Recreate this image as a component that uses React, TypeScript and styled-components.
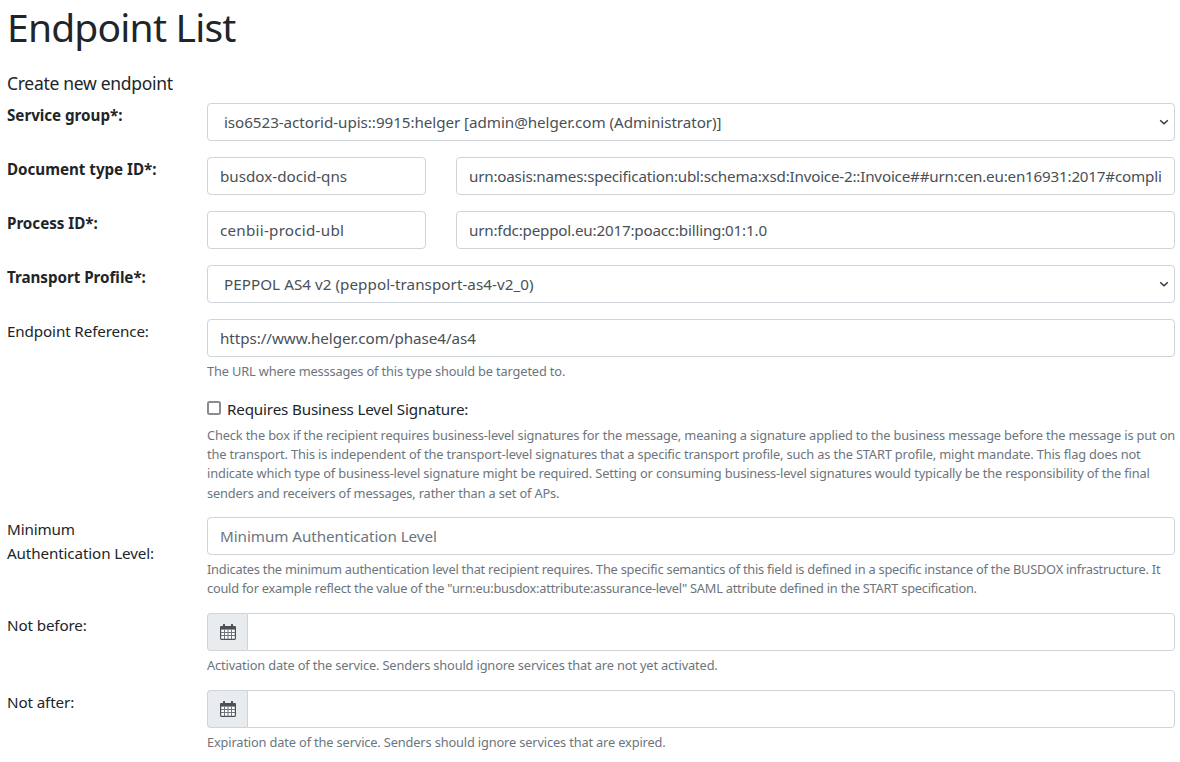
import React from "react";
import styled, { createGlobalStyle } from "styled-components";

const FONT = `"Noto Sans", "Open Sans", "Liberation Sans", sans-serif`;

const chevron = `url("data:image/svg+xml,%3Csvg xmlns='http://www.w3.org/2000/svg' width='10' height='6' viewBox='0 0 10 6'%3E%3Cpath d='M1.2 1.2 5 4.8l3.8-3.6' fill='none' stroke='%23343a40' stroke-width='1.5'/%3E%3C/svg%3E")`;

const Global = createGlobalStyle`
  html, body { margin: 0; padding: 0; background: #fff; }
  body { font-family: ${FONT}; font-size: 16px; line-height: 24px; color: #212529; overflow: hidden; }
`;

const Page = styled.div`
  height: 762px;
  overflow: hidden;
  padding: 0 5px 0 7px;
  box-sizing: border-box;
`;

const Title = styled.h1`
  margin: 0 0 8px;
  padding-top: 3px;
  font-size: 39px;
  line-height: 48px;
  font-weight: 400;
  letter-spacing: -0.8px;
`;

const SubTitle = styled.div`
  font-size: 17.5px;
  line-height: 26px;
  height: 27px;
  letter-spacing: -0.3px;
  padding-top: 2px;
  box-sizing: border-box;
  margin: 17px 0 7.7px;
`;

const Row = styled.div`
  display: grid;
  grid-template-columns: 200px 1fr;
  margin-bottom: 16px;
`;

const Label = styled.label<{ $required?: boolean }>`
  font-size: 15.2px;
  line-height: 24px;
  letter-spacing: ${(p) => (p.$required ? "-0.03px" : "-0.12px")};
  font-weight: ${(p) => (p.$required ? 700 : 400)};
`;

const Field = styled.div`
  min-width: 0;
`;

const Pair = styled.div`
  display: grid;
  grid-template-columns: 219px 1fr;
  column-gap: 30px;
`;

const controlCss = `
  display: block;
  width: 100%;
  height: 38px;
  box-sizing: border-box;
  padding: 6px 12px;
  font-family: ${FONT};
  font-size: 15.2px;
  line-height: 24px;
  color: #495057;
  background-color: #fff;
  border: 1px solid #ced4da;
  border-radius: 4px;
  outline: none;
`;

const Input = styled.input<{ $tracking?: number }>`
  ${controlCss}
  letter-spacing: ${(p) => p.$tracking ?? -0.05}px;
  &::placeholder { color: #6c757d; opacity: 1; }
`;

const Select = styled.select<{ $tracking?: number }>`
  ${controlCss}
  letter-spacing: ${(p) => p.$tracking ?? -0.05}px;
  appearance: none;
  padding-left: 16px;
  padding-right: 24px;
  background-image: ${chevron};
  background-repeat: no-repeat;
  background-position: right 5px center;
`;

const Help = styled.small<{ $tracking?: number }>`
  display: block;
  margin: 5px 0 -1px;
  font-size: 12.8px;
  line-height: 19.2px;
  letter-spacing: ${(p) => p.$tracking ?? -0.145}px;
  color: #6c757d;
  white-space: nowrap;
`;

const CheckHelp = styled(Help)`
  margin-bottom: -2px;
`;

const CheckLabel = styled.label`
  display: flex;
  align-items: center;
  padding-top: 1px;
  font-size: 15.2px;
  line-height: 24px;
  letter-spacing: -0.16px;
`;

const Check = styled.input`
  appearance: none;
  width: 14px;
  height: 14px;
  box-sizing: border-box;
  margin: 0 6px 0 0;
  background: #fff;
  border: 2px solid #8a8a94;
  border-radius: 2.5px;
  position: relative;
  top: -1px;
`;

const InputGroup = styled.div`
  display: flex;
  height: 38px;
`;

const Addon = styled.span`
  display: flex;
  align-items: center;
  justify-content: center;
  flex: 0 0 40px;
  box-sizing: border-box;
  background: #e9ecef;
  border: 1px solid #ced4da;
  border-right: 0;
  border-radius: 4px 0 0 4px;
`;

const GroupInput = styled(Input)`
  flex: 1;
  width: auto;
  min-width: 0;
  border-radius: 0 4px 4px 0;
`;

const CalendarIcon = () => (
  <svg width="16" height="16" viewBox="0 0 16 16" fill="none" aria-hidden="true">
    <rect x="0.6" y="2.6" width="14.8" height="12.8" rx="0.8" fill="#fff" stroke="#495057" strokeWidth="1.2" />
    <path d="M.6 2.4h14.8v3.2H.6z" fill="#495057" />
    <path d="M4 .8v3M12 .8v3" stroke="#495057" strokeWidth="2" strokeLinecap="round" />
    <path d="M1 8.5h14M1 11.5h14M4.5 5.5V15M8 5.5V15M11.5 5.5V15" stroke="#6c757d" strokeWidth="1" />
  </svg>
);

export default function App() {
  return (
    <Page>
      <Global />
      <Title>Endpoint List</Title>
      <SubTitle>Create new endpoint</SubTitle>
      <Row>
        <Label $required>Service group*:</Label>
        <Field>
          <Select defaultValue="a">
            <option value="a">iso6523-actorid-upis::9915:helger [admin@helger.com (Administrator)]</option>
          </Select>
        </Field>
      </Row>
      <Row>
        <Label $required>Document type ID*:</Label>
        <Pair>
          <Input defaultValue="busdox-docid-qns" $tracking={0} />
          <Input $tracking={-0.2} defaultValue="urn:oasis:names:specification:ubl:schema:xsd:Invoice-2::Invoice##urn:cen.eu:en16931:2017#compliant#urn:fdc:peppol.eu:2017:poacc:billing:3.0::2.1" />
        </Pair>
      </Row>
      <Row>
        <Label $required>Process ID*:</Label>
        <Pair>
          <Input defaultValue="cenbii-procid-ubl" $tracking={0.25} />
          <Input $tracking={-0.19} defaultValue="urn:fdc:peppol.eu:2017:poacc:billing:01:1.0" />
        </Pair>
      </Row>
      <Row>
        <Label $required>Transport Profile*:</Label>
        <Field>
          <Select defaultValue="a" $tracking={0.05}>
            <option value="a">PEPPOL AS4 v2 (peppol-transport-as4-v2_0)</option>
          </Select>
        </Field>
      </Row>
      <Row>
        <Label>Endpoint Reference:</Label>
        <Field>
          <Input defaultValue="https://www.helger.com/phase4/as4" />
          <Help>The URL where messsages of this type should be targeted to.</Help>
        </Field>
      </Row>
      <Row>
        <span />
        <Field>
          <CheckLabel>
            <Check type="checkbox" />
            Requires Business Level Signature:
          </CheckLabel>
          <CheckHelp>
            Check the box if the recipient requires business-level signatures for the message, meaning a signature applied to the business message before the message is put on
            <br />
            the transport. This is independent of the transport-level signatures that a specific transport profile, such as the START profile, might mandate. This flag does not
            <br />
            indicate which type of business-level signature might be required. Setting or consuming business-level signatures would typically be the responsibility of the final
            <br />
            senders and receivers of messages, rather than a set of APs.
          </CheckHelp>
        </Field>
      </Row>
      <Row>
        <Label>
          Minimum
          <br />
          Authentication Level:
        </Label>
        <Field>
          <Input placeholder="Minimum Authentication Level" />
          <Help $tracking={-0.225}>
            Indicates the minimum authentication level that recipient requires. The specific semantics of this field is defined in a specific instance of the BUSDOX infrastructure. It
            <br />
            could for example reflect the value of the "urn:eu:busdox:attribute:assurance-level" SAML attribute defined in the START specification.
          </Help>
        </Field>
      </Row>
      <Row>
        <Label>Not before:</Label>
        <Field>
          <InputGroup>
            <Addon><CalendarIcon /></Addon>
            <GroupInput />
          </InputGroup>
          <Help>Activation date of the service. Senders should ignore services that are not yet activated.</Help>
        </Field>
      </Row>
      <Row>
        <Label>Not after:</Label>
        <Field>
          <InputGroup>
            <Addon><CalendarIcon /></Addon>
            <GroupInput />
          </InputGroup>
          <Help>Expiration date of the service. Senders should ignore services that are expired.</Help>
        </Field>
      </Row>
    </Page>
  );
}
